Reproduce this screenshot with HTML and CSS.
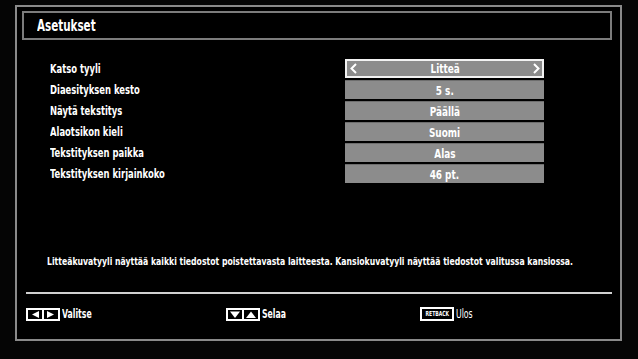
FILE: index.html
```html
<!DOCTYPE html>
<html lang="fi">
<head>
<meta charset="utf-8">
<title>Asetukset</title>
<link rel="stylesheet" href="styles.css">
</head>
<body>
<div class="screen">
  <div class="title-box"><span class="title narrow">Asetukset</span></div>
  <div class="settings">
    <div class="row">
      <span class="label"><span class="narrow">Katso tyyli</span></span>
      <span class="value selected">
        <svg class="chev" width="7" height="11" viewBox="0 0 7 11"><polyline points="6,1 1.5,5.5 6,10" fill="none" stroke="#fff" stroke-width="2"/></svg>
        <span class="val-text">Litteä</span>
        <svg class="chev" width="7" height="11" viewBox="0 0 7 11"><polyline points="1,1 5.5,5.5 1,10" fill="none" stroke="#fff" stroke-width="2"/></svg>
      </span>
    </div>
    <div class="row"><span class="label"><span class="narrow">Diaesityksen kesto</span></span><span class="value"><span class="val-text">5 s.</span></span></div>
    <div class="row"><span class="label"><span class="narrow">Näytä tekstitys</span></span><span class="value"><span class="val-text">Päällä</span></span></div>
    <div class="row"><span class="label"><span class="narrow">Alaotsikon kieli</span></span><span class="value"><span class="val-text">Suomi</span></span></div>
    <div class="row"><span class="label"><span class="narrow">Tekstityksen paikka</span></span><span class="value"><span class="val-text">Alas</span></span></div>
    <div class="row"><span class="label"><span class="narrow">Tekstityksen kirjainkoko</span></span><span class="value"><span class="val-text">46 pt.</span></span></div>
  </div>
  <p class="desc"><span class="narrow desc-text">Litteäkuvatyyli näyttää kaikki tiedostot poistettavasta laitteesta. Kansiokuvatyyli näyttää tiedostot valitussa kansiossa.</span></p>
  <div class="separator"></div>
  <div class="footer">
    <div class="hint hint-1">
      <svg class="key" width="34" height="13" viewBox="0 0 34 13">
        <rect x="1" y="1" width="32" height="11" fill="#000" stroke="#fff" stroke-width="2"/>
        <rect x="16" y="1" width="2" height="11" fill="#fff"/>
        <polygon points="13,3 13,10 6,6.5" fill="#fff"/>
        <polygon points="21,3 21,10 28,6.5" fill="#fff"/>
      </svg>
      <span class="hint-text narrow">Valitse</span>
    </div>
    <div class="hint hint-2">
      <svg class="key" width="34" height="13" viewBox="0 0 34 13">
        <rect x="1" y="1" width="32" height="11" fill="#000" stroke="#fff" stroke-width="2"/>
        <rect x="16" y="1" width="2" height="11" fill="#fff"/>
        <polygon points="4,3.5 14,3.5 9,10" fill="#fff"/>
        <polygon points="20,10 30,10 25,3.5" fill="#fff"/>
      </svg>
      <span class="hint-text narrow">Selaa</span>
    </div>
    <div class="hint hint-3">
      <span class="retback"><span class="ret-text">RETBACK</span></span>
      <span class="hint-text narrow light">Ulos</span>
    </div>
  </div>
</div>
</body>
</html>
```
FILE: styles.css
```css
html, body {
  margin: 0;
  padding: 0;
  background: #050505;
}

body {
  width: 638px;
  height: 359px;
  overflow: hidden;
  font-family: "DejaVu Sans Condensed", "DejaVu Sans", sans-serif;
  font-weight: bold;
  color: #fff;
}

.narrow {
  display: inline-block;
  transform: scaleX(0.72);
  transform-origin: left center;
  white-space: nowrap;
}

.screen {
  box-sizing: border-box;
  margin: 5px 0 0 15px;
  width: 607px;
  height: 336px;
  border: 2px solid #8a8a8a;
  background: #000;
  padding: 4px 8px 0 5px;
  display: flex;
  flex-direction: column;
  overflow: hidden;
}

.title-box {
  box-sizing: border-box;
  height: 29px;
  border: 2px solid #7c7c7c;
  display: flex;
  align-items: center;
  padding-left: 13px;
}

.title {
  font-size: 16px;
  line-height: 1;
}

.settings {
  margin-top: 19px;
  padding-left: 28px;
  display: flex;
  flex-direction: column;
  gap: 2px;
}

.row {
  display: flex;
  align-items: center;
  height: 19px;
}

.label {
  width: 295px;
  font-size: 13px;
  line-height: 1;
}

.value {
  box-sizing: border-box;
  width: 199px;
  height: 19px;
  background: #8c8c8c;
  border-top: 1px solid #6e6e6e;
  display: flex;
  align-items: center;
  justify-content: center;
  font-size: 13px;
}

.value.selected {
  border: 2px solid #f2f2f2;
  justify-content: space-between;
  padding: 0 2px 0 3px;
}

.chev {
  display: block;
}

.val-text {
  display: inline-block;
  line-height: 1;
  white-space: nowrap;
  transform: scaleX(0.76);
  transform-origin: center center;
}

.desc {
  margin: 72px 0 0 25px;
  font-size: 11px;
  line-height: 13px;
  white-space: nowrap;
  overflow: hidden;
}

.desc-text {
  transform: scaleX(0.78);
}

.separator {
  margin: 24px 0 0 4px;
  height: 2px;
  background: #d0d0d0;
}

.footer {
  display: flex;
  align-items: center;
  margin: 13px 0 0 4px;
  height: 14px;
}

.hint {
  display: flex;
  align-items: center;
  gap: 2px;
}

.hint-1 {
  width: 200px;
}

.hint-2 {
  width: 194px;
}

.key {
  display: block;
}

.hint-text {
  font-size: 12px;
  line-height: 1;
}

.hint-text.light {
  font-weight: normal;
}

.retback {
  box-sizing: border-box;
  width: 34px;
  height: 14px;
  border: 2px solid #fff;
  display: flex;
  align-items: center;
  justify-content: center;
  overflow: hidden;
}

.ret-text {
  display: inline-block;
  font-size: 7px;
  line-height: 1;
  transform: scaleX(0.72);
  transform-origin: center center;
}
```
